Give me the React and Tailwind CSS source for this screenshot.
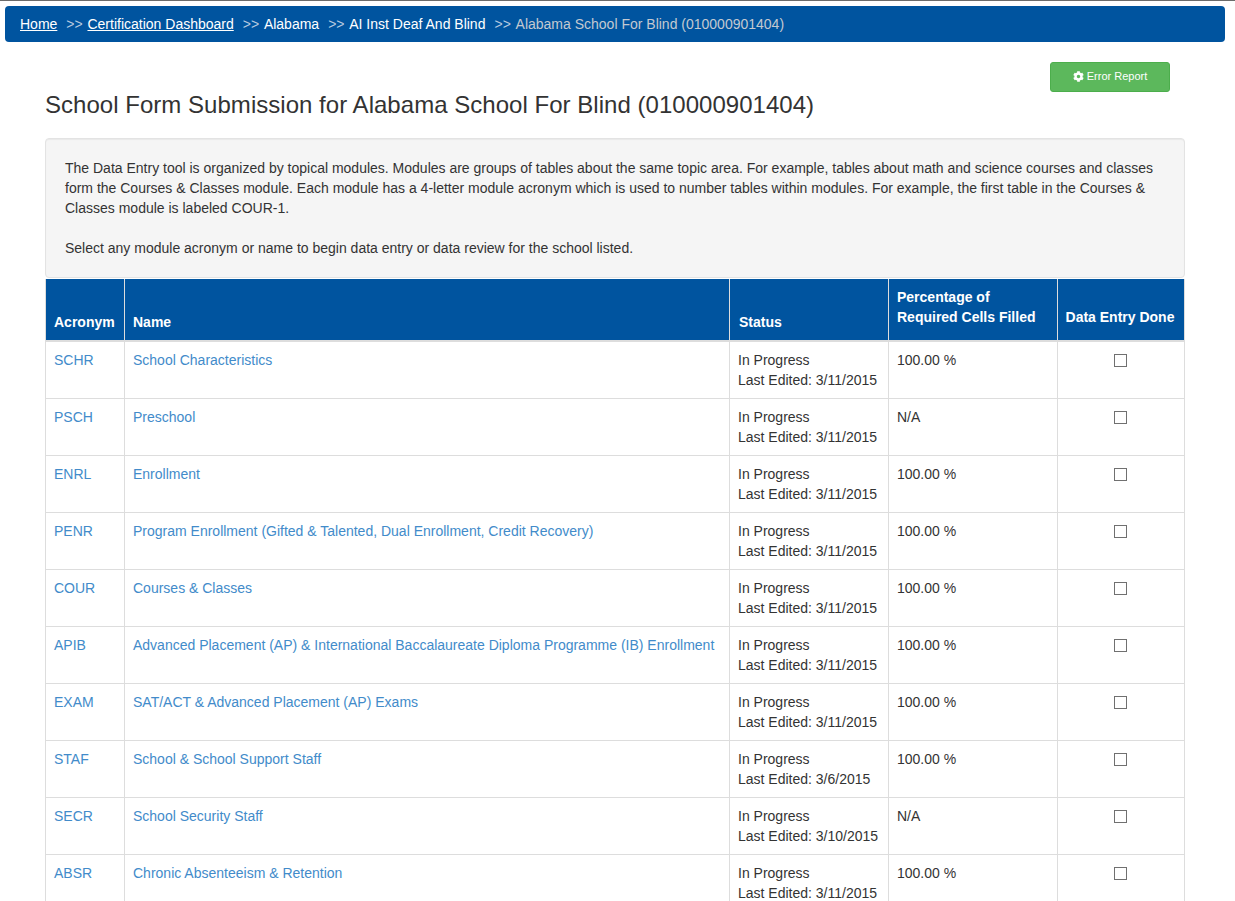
import { FaCog } from "react-icons/fa";

const modules = [
  ["SCHR", "School Characteristics", "3/11/2015", "100.00 %"],
  ["PSCH", "Preschool", "3/11/2015", "N/A"],
  ["ENRL", "Enrollment", "3/11/2015", "100.00 %"],
  ["PENR", "Program Enrollment (Gifted & Talented, Dual Enrollment, Credit Recovery)", "3/11/2015", "100.00 %"],
  ["COUR", "Courses & Classes", "3/11/2015", "100.00 %"],
  ["APIB", "Advanced Placement (AP) & International Baccalaureate Diploma Programme (IB) Enrollment", "3/11/2015", "100.00 %"],
  ["EXAM", "SAT/ACT & Advanced Placement (AP) Exams", "3/11/2015", "100.00 %"],
  ["STAF", "School & School Support Staff", "3/6/2015", "100.00 %"],
  ["SECR", "School Security Staff", "3/10/2015", "N/A"],
  ["ABSR", "Chronic Absenteeism & Retention", "3/11/2015", "100.00 %"],
];

const Sep = () => <span className="text-[#b5c9e0] ml-[9px] mr-[4.75px]">&gt;&gt;</span>;

export default function App() {
  return (
    <div className="h-[901px] overflow-hidden bg-white border-t border-[#6b6b6b] font-['Liberation_Sans',Arial,sans-serif] text-sm leading-5 text-[#333]">
      {/* Breadcrumb */}
      <div className="ml-[5px] mr-[10px] mt-[5px] h-9 rounded bg-[#00549f] pl-[15px] flex items-center text-white whitespace-pre">
        <a href="#" className="underline">Home</a>
        <Sep />
        <a href="#" className="underline">Certification Dashboard</a>
        <Sep />
        <span>Alabama</span>
        <Sep />
        <span>AI Inst Deaf And Blind</span>
        <Sep />
        <span className="text-[#c3c9d1]">Alabama School For Blind (010000901404)</span>
      </div>

      <div className="pl-[45px] w-[1185px]">
        <div className="flex justify-end pr-[15px] mt-5">
          <button className="w-[120px] h-[30px] pb-[2px] rounded-[3px] border border-[#4cae4c] bg-[#5cb85c] text-white text-[11px] flex items-center justify-center gap-[3px]">
            <FaCog className="w-[11px] h-[11px]" />
            Error Report
          </button>
        </div>

        <h1 className="text-2xl leading-[26px] tracking-[0.03px] font-normal text-[#333]">
          School Form Submission for Alabama School For Blind (010000901404)
        </h1>

        {/* Intro box */}
        <div className="mt-5 h-[140px] rounded border border-[#e3e3e3] bg-[#f5f5f5] p-[19px] shadow-[inset_0_1px_1px_rgba(0,0,0,0.05)]">
          <p>
            The Data Entry tool is organized by topical modules. Modules are groups of tables about the same topic area. For example, tables about math and science courses and classes form the Courses &amp; Classes module. Each module has a 4-letter module acronym which is used to number tables within modules. For example, the first table in the Courses &amp; Classes module is labeled COUR-1.
          </p>
          <p className="mt-5">
            Select any module acronym or name to begin data entry or data review for the school listed.
          </p>
        </div>

        {/* Modules table */}
        <table className="w-[1139px] table-fixed border-collapse mt-px">
          <thead>
            <tr className="bg-[#00549f] text-white h-[62px]">
              <th className="w-[79px] border border-[#ddd] border-b-2 border-t-0 px-2 py-2 text-left align-bottom font-bold">Acronym</th>
              <th className="w-[605px] border border-[#ddd] border-b-2 border-t-0 px-2 py-2 text-left align-bottom font-bold">Name</th>
              <th className="w-[159px] border border-[#ddd] border-b-2 border-t-0 pl-[9px] pr-2 py-2 text-left align-bottom font-bold">Status</th>
              <th className="w-[169px] border border-[#ddd] border-b-2 border-t-0 px-2 pt-2 pb-[13px] text-left align-bottom font-bold">
                Percentage of<br />Required Cells Filled
              </th>
              <th className="w-[127px] border border-[#ddd] border-b-2 border-t-0 pl-[7px] pr-[9px] pt-2 pb-[13px] text-center align-bottom font-bold whitespace-nowrap">Data Entry Done</th>
            </tr>
          </thead>
          <tbody>
            {modules.map(([acronym, name, edited, pct]) => (
              <tr key={acronym} className="h-[57px]">
                <td className="border border-[#ddd] px-2 py-2 align-top">
                  <a href="#" className="text-[#428bca]">{acronym}</a>
                </td>
                <td className="border border-[#ddd] px-2 py-2 align-top">
                  <a href="#" className="text-[#428bca]">{name}</a>
                </td>
                <td className="border border-[#ddd] px-2 py-2 align-top">
                  In Progress<br />Last Edited: {edited}
                </td>
                <td className="border border-[#ddd] px-2 py-2 align-top">{pct}</td>
                <td className="border border-[#ddd] pl-[7px] pr-[9px] py-2 align-top text-center">
                  <input type="checkbox" readOnly className="appearance-none block mx-auto mt-[4px] w-[13px] h-[13px] border border-[#707070] bg-white" />
                </td>
              </tr>
            ))}
          </tbody>
        </table>
      </div>
    </div>
  );
}
